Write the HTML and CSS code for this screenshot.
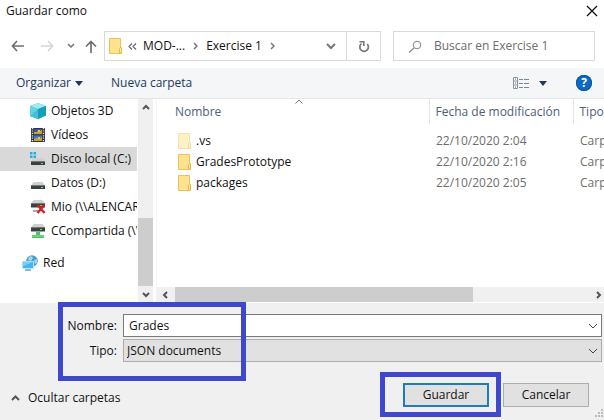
FILE: index.html
```html
<!DOCTYPE html>
<html lang="es">
<head>
<meta charset="utf-8">
<title>Guardar como</title>
<link rel="stylesheet" href="styles.css">
</head>
<body>
<svg class="defs" aria-hidden="true">
  <symbol id="folder" viewBox="0 0 14 16">
    <path d="M.5.5h11v9.500h1v5.500H.5z" fill="#ffe28e" stroke="#e8c35c"/>
    <path d="M10.500 15V10.500l1-1h1V15z" fill="#ffe9a8" stroke="#e3b94a"/>
  </symbol>
  <symbol id="chevron" viewBox="0 0 10 6"><path d="M1 1l4 4 4-4" fill="none" stroke="currentColor"/></symbol>
  <symbol id="drive" viewBox="0 0 16 16">
    <path d="M3.500 7h9L15 10.500H1z" fill="#d0d0d0"/>
    <path d="M1 10h14v4H1z" fill="#3c4043"/>
    <path d="M1 10h14v1H1z" fill="#777"/>
    <path d="M11 12h2v1h-2z" fill="#5ce65c"/>
  </symbol>
  <symbol id="netdrive" viewBox="0 0 16 16">
    <path d="M3.500 1h9L15 4.500H1z" fill="#d0d0d0"/>
    <path d="M1 4h14v4.500H1z" fill="#3c4043"/>
    <path d="M1 4h14v1H1z" fill="#777"/>
    <path d="M10 6h2v1h-2z" fill="#5ce65c"/>
  </symbol>
</svg>
<main class="dialog">
  <header class="title">
    <h1>Guardar como</h1>
    <button class="close" aria-label="Cerrar"><svg width="12" height="12" viewBox="0 0 12 12"><path d="M1 1l10 10M11 1L1 11" stroke="#111" stroke-width="1.300"/></svg></button>
  </header>
  <nav class="nav">
    <div class="arrows">
      <button aria-label="Atrás"><svg width="14" height="12" viewBox="0 0 14 12"><path d="M13 6H2M6 1L1.500 6 6 11" fill="none" stroke="#707070" stroke-width="1.700"/></svg></button>
      <button aria-label="Adelante"><svg width="14" height="12" viewBox="0 0 14 12"><path d="M1 6h11M8 1l4.500 5L8 11" fill="none" stroke="#d6d6d6" stroke-width="1.600"/></svg></button>
      <button aria-label="Recientes"><svg width="8" height="6" viewBox="0 0 8 6"><path d="M1 1l3 3 3-3" fill="none" stroke="#707070" stroke-width="1.500"/></svg></button>
      <button aria-label="Subir"><svg width="12" height="13" viewBox="0 0 12 13"><path d="M6 13V2M1 6.500L6 1.500l5 5" fill="none" stroke="#707070" stroke-width="1.700"/></svg></button>
    </div>
    <div class="address">
      <svg width="14" height="16"><use href="#folder"/></svg>
      <svg class="prev" width="9" height="7" viewBox="0 0 9 7"><path d="M4 .5l-3 3 3 3M8 .5l-3 3 3 3" fill="none" stroke="#666" stroke-width="1.200"/></svg>
      <button class="crumb">MOD-...</button>
      <svg class="sep" width="5" height="8" viewBox="0 0 5 8"><path d="M1 1l3 3-3 3" fill="none" stroke="#777" stroke-width="1.500"/></svg>
      <button class="crumb">Exercise 1</button>
      <svg class="sep" width="5" height="8" viewBox="0 0 5 8"><path d="M1 1l3 3-3 3" fill="none" stroke="#777" stroke-width="1.500"/></svg>
      <button class="history" aria-label="Ubicaciones anteriores"><svg width="10" height="7" viewBox="0 0 10 7"><path d="M1 1l4 4 4-4" fill="none" stroke="#777" stroke-width="2"/></svg></button>
      <button class="refresh" aria-label="Actualizar"><svg width="12" height="13" viewBox="0 0 12 13"><path d="M9.200 4A4.300 4.300 0 1 1 3.500 3.600" fill="none" stroke="#777" stroke-width="1.700"/><path d="M1.500 1.800h4.300V6" fill="none" stroke="#777" stroke-width="1.600"/></svg></button>
    </div>
    <label class="search">
      <svg width="14" height="13" viewBox="0 0 14 13"><circle cx="9" cy="5" r="3.800" fill="none" stroke="#888"/><path d="M6 8l-5 4.500" stroke="#888" stroke-width="1.200"/></svg>
      <input type="search" aria-label="Buscar" placeholder="Buscar en Exercise 1">
    </label>
  </nav>
  <div class="toolbar">
    <button class="organize">Organizar <svg width="8" height="5" viewBox="0 0 8 5"><path d="M0 0h8L4 5z" fill="#1e395b"/></svg></button>
    <button>Nueva carpeta</button>
    <button class="view" aria-label="Vista"><svg width="16" height="12" viewBox="0 0 16 12"><path d="M.5.5h4v11h-4zM.5 4h4M.5 8h4" fill="#fff" stroke="#8b929b"/><path d="M6 2.500h4M11 2.500h5M6 6.500h4M11 6.500h5M6 10.500h4M11 10.500h5" stroke="#7c8590"/><path d="M2 2h1M2 6h1M2 10h1" stroke="#555"/></svg><svg width="8" height="5" viewBox="0 0 8 5"><path d="M0 0h8L4 5z" fill="#1e395b"/></svg></button>
    <button class="help" aria-label="Ayuda">?</button>
  </div>
  <section class="browser">
    <ul class="tree">
      <li><svg width="16" height="16" viewBox="0 0 16 16"><path d="M8 0l8 3v9.500L8 16 0 13V3z" fill="#35b8d4"/><path d="M8 0l8 3-8 3-8-3z" fill="#a8e8f2"/><path d="M8 6l8-3v9.500L8 16z" fill="#14a0bd"/><path d="M0 3l8 3v10L0 13z" fill="#63d2e5"/><path d="M0 13l8-7v10z" fill="#43bfd8"/></svg>Objetos 3D</li>
      <li><svg width="16" height="16" viewBox="0 0 16 16"><path d="M1 1h14v14H1z" fill="#333"/><path d="M2.500 1v14M13.500 1v14" stroke="#ddd" stroke-width="1.400" stroke-dasharray="1.200 1.200"/><path d="M4 2h8v5.500H4z" fill="#384fb4"/><path d="M4 8.500h8V14H4z" fill="#3979d2"/><path d="M4 5h3l1-2 2 1 2-1v4H4zM4 12l3-1 2 1 3-2v4H4z" fill="#c6a52d"/><path d="M8 3h2v2H8zM8 10h2v2H8z" fill="#eac54a"/></svg>Vídeos</li>
      <li class="selected"><svg width="16" height="16"><use href="#drive"/><path d="M0 1h2.500v2.500H0zM3.500 1H6v2.500H3.500zM0 4.500h2.500V7H0zM3.500 4.500H6V7H3.500z" fill="#20aee5"/></svg>Disco local (C:)</li>
      <li><svg width="16" height="16"><use href="#drive"/></svg>Datos (D:)</li>
      <li><svg width="16" height="16"><use href="#netdrive"/><path d="M3 11h7v2H3z" fill="#aaa"/><path d="M7.500 6l7 8M14.500 6l-7 8" stroke="#d42026" stroke-width="2.400"/></svg><span>Mio (\\ALENCAR</span></li>
      <li><svg width="16" height="16"><use href="#netdrive"/><path d="M6 9h4v3h4v3H2v-3h4z" fill="#4ac35a"/><path d="M2 13h12" stroke="#8be391"/></svg><span>CCompartida (\\</span></li>
      <li class="root"><svg width="16" height="16" viewBox="0 0 16 16"><circle cx="10" cy="6" r="5.800" fill="#4a9cce"/><path d="M7 2q3-2 4 1l-2 3-3-1zM12 5l3-1v4l-2 1z" fill="#a4d8e9"/><path d="M.5 6.500h11v7H.5z" fill="#45b5ed" stroke="#bde6fa"/><path d="M.5 6.500h11l-11 5z" fill="#7dcef5"/><path d="M3 15h6" stroke="#4c86a8" stroke-width="1.200"/></svg>Red</li>
    </ul>
    <div class="vscroll">
      <svg width="8" height="7" viewBox="0 0 8 7"><path d="M1 5l3-3 3 3" fill="none" stroke="#555" stroke-width="2"/></svg>
      <div class="vthumb"></div>
      <svg width="8" height="7" viewBox="0 0 8 7"><path d="M1 2l3 3 3-3" fill="none" stroke="#555" stroke-width="2"/></svg>
    </div>
    <div class="files">
      <svg class="sort" width="8" height="5" viewBox="0 0 8 5"><path d="M.5 4.500L4 1l3.500 3.500" fill="none" stroke="#777"/></svg>
      <table>
        <thead><tr><th class="name">Nombre</th><th class="date">Fecha de modificación</th><th class="type">Tipo</th></tr></thead>
        <tbody>
          <tr><td><div class="file"><svg class="hidden-item" width="14" height="16"><use href="#folder"/></svg>.vs</div></td><td>22/10/2020 2:04</td><td>Carp</td></tr>
          <tr><td><div class="file"><svg width="14" height="16"><use href="#folder"/></svg>GradesPrototype</div></td><td>22/10/2020 2:16</td><td>Carp</td></tr>
          <tr><td><div class="file"><svg width="14" height="16"><use href="#folder"/></svg>packages</div></td><td>22/10/2020 2:05</td><td>Carp</td></tr>
        </tbody>
      </table>
      <div class="hscroll">
        <svg width="7" height="8" viewBox="0 0 7 8"><path d="M5 1L2 4l3 3" fill="none" stroke="#555" stroke-width="2"/></svg>
        <div class="htrack"><div class="hthumb"></div></div>
        <svg width="7" height="8" viewBox="0 0 7 8"><path d="M2 1l3 3-3 3" fill="none" stroke="#555" stroke-width="2"/></svg>
      </div>
    </div>
  </section>
  <form class="bottom">
    <div class="fields">
      <label for="filename">Nombre:</label>
      <div class="combo"><input id="filename" type="text" value="Grades"><svg width="10" height="6"><use href="#chevron"/></svg></div>
      <label for="filetype">Tipo:</label>
      <div class="combo"><select id="filetype"><option>JSON documents</option></select><svg width="10" height="6"><use href="#chevron"/></svg></div>
      <div class="mark mark-fields"></div>
    </div>
    <footer class="actions">
      <button type="button" class="hide"><svg width="9" height="6" viewBox="0 0 9 6"><path d="M1 5l3.500-3.500L8 5" fill="none" stroke="#555" stroke-width="2"/></svg>Ocultar carpetas</button>
      <div class="save"><button type="button" class="push primary">Guardar</button><div class="mark mark-save"></div></div>
      <button type="button" class="push">Cancelar</button>
      <svg class="grip" width="9" height="9" viewBox="0 0 9 9"><path d="M6 0h2v2H6zM3 3h2v2H3zM6 3h2v2H6zM0 6h2v2H0zM3 6h2v2H3zM6 6h2v2H6z" fill="#bcbcbc"/></svg>
    </footer>
  </form>
</main>
</body>
</html>
```
FILE: styles.css
```css
* { box-sizing: border-box; }
body { margin: 0; background: #f0f0f0; color: #111; font: 12px/16px "Open Sans", "Noto Sans", sans-serif; }
button, input, select { font: inherit; color: inherit; }
button { border: 0; background: none; padding: 0; }
svg { flex: none; display: block; }
.defs { position: absolute; width: 0; height: 0; }
.dialog { display: flex; flex-direction: column; min-height: 100vh; overflow: hidden; }

.title { display: flex; justify-content: space-between; align-items: center; height: 22px; padding: 0 6px; background: #fff; }
h1 { margin: 0; font-size: 12px; font-weight: 400; }

.nav { display: grid; grid-template-columns: 93px minmax(0, 289fr) minmax(0, 202fr); background: #fff; padding: 9px 9px 7px 11px; }
.arrows { display: flex; align-items: center; }
.arrows button:nth-child(2) { margin-left: 15px; }
.arrows button:nth-child(3) { margin-left: 13px; }
.arrows button:nth-child(4) { margin-left: 10px; }
.address, .search { display: flex; align-items: center; height: 30px; border: 1px solid #d9d9d9; }
.address { margin-right: 12px; padding-left: 4px; }
.prev { margin: 0 6px 0 5px; }
.crumb { margin-right: 8px; white-space: nowrap; }
.address .sep + .crumb { margin-left: 8px; }
.history { margin-left: auto; margin-right: 10px; }
.refresh { display: flex; align-items: center; justify-content: center; width: 34px; height: 28px; border-left: 1px solid #d9d9d9; }
.search { padding-left: 14px; gap: 12px; }
.search input { flex: 1; min-width: 0; border: 0; padding: 0; outline: 0; background: none; }
.search input::placeholder { color: #6d6d6d; opacity: 1; }

.toolbar { display: flex; align-items: center; height: 31px; padding: 0 12px 0 16px; background: #f5f6f7; border-bottom: 1px solid #e5e6e8; color: #1e395b; }
.organize { display: flex; align-items: center; gap: 4px; margin-right: 28px; }
.view { display: flex; align-items: center; gap: 10px; margin-left: auto; margin-right: 29px; }
.help { width: 16px; height: 16px; border-radius: 50%; background: #0b6ac4; color: #fff; font-weight: 700; line-height: 16px; box-shadow: 0 0 0 1px #0a5299 inset; }

.browser { display: grid; grid-template-columns: 138px 15px minmax(0, 1fr); height: 204px; background: #fff; }
.tree { list-style: none; margin: 0; padding: 0; overflow: hidden; white-space: nowrap; }
.tree li { display: flex; align-items: center; gap: 5px; height: 24px; margin-right: 1px; padding-left: 30px; overflow: hidden; }
.tree .selected { background: #d9d9d9; }
.tree .root { margin-top: 8px; padding-left: 22px; }
.vscroll { display: flex; flex-direction: column; align-items: center; justify-content: space-between; padding: 5px 0; background: #f0f0f0; }
.vthumb { width: 15px; height: 68px; background: #cdcdcd; margin-top: auto; margin-bottom: 5px; }
.files { position: relative; display: flex; flex-direction: column; margin-left: 3px; border-left: 1px solid #f3f3f3; overflow: hidden; }
.sort { position: absolute; left: 138px; top: 0; }
table { width: 100%; table-layout: fixed; border-collapse: collapse; white-space: nowrap; color: #6d6d6d; }
th { height: 25px; padding: 0 0 0 6px; text-align: left; font-weight: 400; color: #4c607a; border-left: 1px solid #e5e5e5; }
th.name { padding-left: 18px; border-left: 0; }
th.date { width: 144px; }
th.type { width: 31px; }
tbody::before { content: ""; display: block; height: 6px; }
td { height: 21px; padding: 0 0 0 7px; }
td:first-child { padding-left: 21px; color: #111; }
.file { display: flex; align-items: center; gap: 4px; }
.hidden-item { opacity: .5; }
.hscroll { display: flex; align-items: center; height: 15px; margin-top: auto; margin-bottom: 1px; padding: 0 2px 0 5px; background: #f0f0f0; }
.htrack { flex: 1; height: 15px; margin: 0 6px; }
.hthumb { width: 72%; height: 15px; background: #cdcdcd; }

.bottom { flex: 1; display: flex; flex-direction: column; }
.fields { position: relative; display: grid; grid-template-columns: 117px minmax(0, 1fr); column-gap: 6px; row-gap: 2px; align-items: center; padding: 11px 2px 0 0; }
.fields label { text-align: right; }
.combo { display: flex; align-items: center; height: 23px; border: 1px solid #7a7a7a; background: #fff; padding-right: 3px; color: #444; }
.combo input, .combo select { flex: 1; min-width: 0; border: 0; background: none; padding: 0 0 0 5px; outline: 0; color: #111; appearance: none; }
.combo select { padding-left: 3px; }
.combo:has(select) { background: #e1e1e1; border-color: #adadad; }
.mark { position: absolute; border: 5px solid #3f48cc; pointer-events: none; }
.mark-fields { left: 58px; top: -1px; width: 188px; height: 79px; }
.actions { position: relative; display: flex; align-items: center; gap: 14px; padding: 21px 15px 0 11px; }
.hide { display: flex; align-items: center; gap: 8px; margin-right: auto; padding-top: 6px; }
.save { position: relative; display: flex; }
.push { width: 86px; height: 24px; background: #e1e1e1; border: 1px solid #adadad; }
.primary { border: 2px solid #1e7bbd; }
.mark-save { left: -23px; top: -11px; width: 121px; height: 45px; }
.grip { position: absolute; right: 0; bottom: -11px; }
```
